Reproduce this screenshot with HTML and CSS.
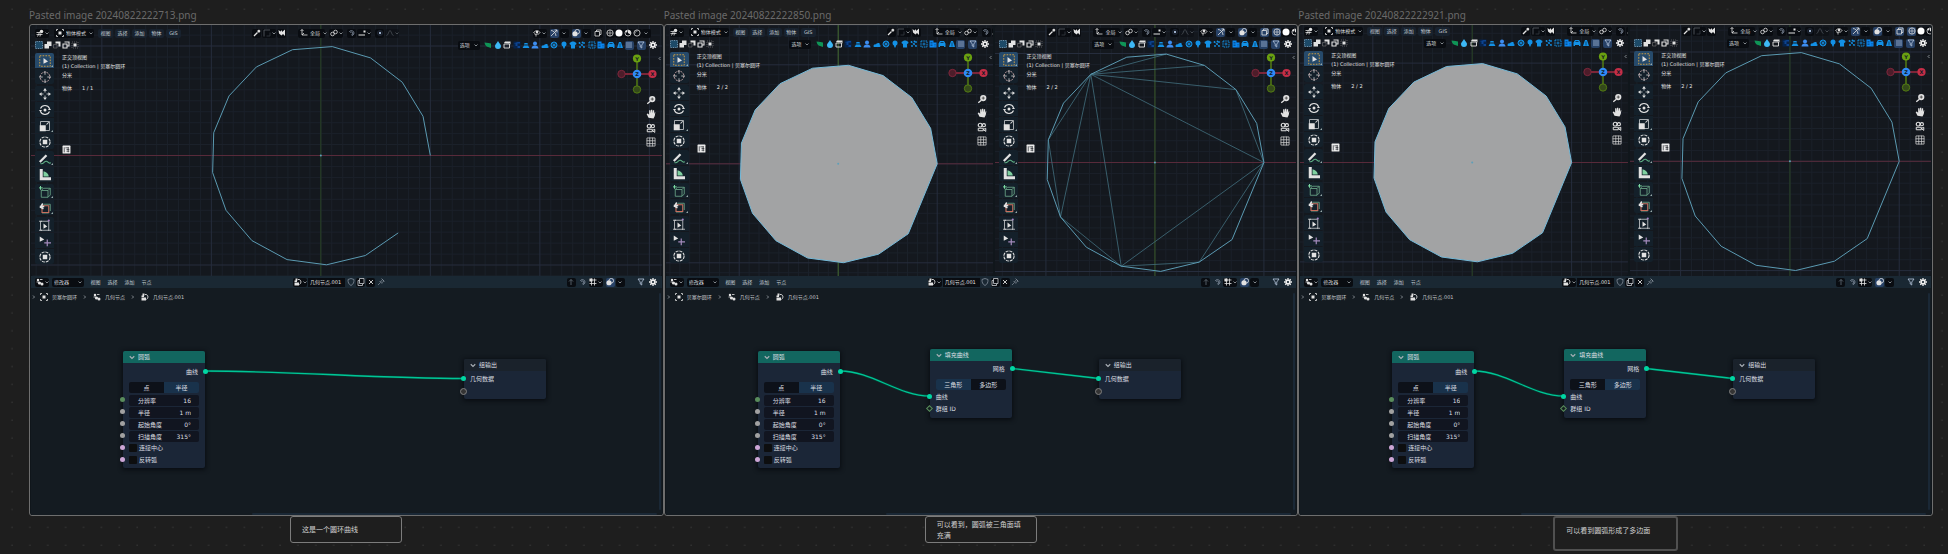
FILE: index.html
```html
<!DOCTYPE html>
<html lang="zh-CN">
<head>
<meta charset="utf-8">
<title>Canvas</title>
<link rel="stylesheet" href="styles.css">
</head>
<body>
<svg class="dots" aria-hidden="true">
  <defs><pattern id="dot" width="17.87" height="17.87" patternUnits="userSpaceOnUse"><rect x="11.4" y="8.6" width="1.4" height="1.2" fill="#363636"/></pattern></defs>
  <rect width="100%" height="100%" fill="url(#dot)"/>
</svg>
<main class="canvas">
  <section class="column">
    <h2 class="title">Pasted image 20240822222713.png</h2>
    <article class="card">
      <div class="views views-single">
        <div class="viewport" data-scene="arc"></div>
      </div>
      <div class="nodes" data-fill="none"></div>
    </article>
    <p class="note">这是一个圆环曲线</p>
  </section>
  <section class="column">
    <h2 class="title">Pasted image 20240822222850.png</h2>
    <article class="card card-b">
      <div class="views">
        <div class="viewport" data-scene="solid"></div>
        <div class="viewport" data-scene="triangles"></div>
      </div>
      <div class="nodes" data-fill="三角形"></div>
    </article>
    <p class="note">可以看到，圆弧被三角面填充满</p>
  </section>
  <section class="column">
    <h2 class="title">Pasted image 20240822222921.png</h2>
    <article class="card card-c">
      <div class="views">
        <div class="viewport" data-scene="solidNgon"></div>
        <div class="viewport" data-scene="ngon"></div>
      </div>
      <div class="nodes" data-fill="多边形"></div>
    </article>
    <p class="note note-large">可以看到圆弧形成了多边面</p>
  </section>
</main>
<script src="app.js"></script>
</body>
</html>
```
FILE: styles.css
```css
* { box-sizing: border-box; }

body {
  margin: 0;
  background: #1e1e1e;
  color: #d4d8dc;
  font-family: "DejaVu Sans", "Noto Sans CJK SC", sans-serif;
  font-size: 5px;
  line-height: 9px;
}

button, input, select {
  margin: 0;
  padding: 0;
  border: 0;
  background: none;
  color: inherit;
  font: inherit;
}

svg { display: block; flex: none; }

.dots {
  position: absolute;
  inset: 0;
  z-index: -1;
  width: 100%;
  height: 100%;
}

/* canvas */
.canvas {
  display: grid;
  grid-template-columns: repeat(3, minmax(0, 1fr));
  min-height: 100vh;
  padding: 7px 15px 0 29px;
  align-items: start;
}

.title {
  margin: 0 0 1px;
  color: #6a6a6a;
  font: 400 10px/16px "Noto Sans", sans-serif;
}

.card {
  overflow: hidden;
  padding: 0 1px;
  border: 1px solid #6e6e6e;
  border-radius: 3px;
  background: #10161b;
}

.note {
  display: flex;
  align-items: center;
  width: 112px;
  min-height: 27px;
  margin: 0 0 0 261px;
  padding: 1px 11px;
  border: 1px solid #7c7c7c;
  border-radius: 3px;
  background: #1e1e1e;
  color: #d2d2d2;
  font: 400 7px/11px "Noto Sans CJK SC", sans-serif;
}

.note-large {
  align-items: flex-start;
  width: 125px;
  min-height: 35px;
  margin-left: 255px;
  padding-top: 7px;
  border: 2px solid #505050;
}

/* 3D viewports */
.views {
  display: grid;
  grid-template-columns: minmax(0, 328fr) minmax(0, 301fr);
  gap: 2px;
}
.views-single { grid-template-columns: minmax(0, 1fr); }

.viewport {
  position: relative;
  overflow: hidden;
  min-height: 251px;
  padding-top: 2px;
  border-radius: 3px;
  background: #14181e;
}
.card-b .viewport { padding-top: 1px; }
.card-c .viewport { padding-top: 0; }

.scene {
  position: absolute;
  inset: 0;
  width: 100%;
  height: 100%;
}

.bar {
  position: relative;
  display: flex;
  align-items: center;
  height: 12px;
  padding-left: 4px;
  white-space: nowrap;
}

.i { width: 8px; height: 8px; }
.chev { width: 4px; height: 4px; }

.ib {
  display: flex;
  flex: none;
  align-items: center;
  justify-content: center;
  gap: 1px;
  height: 9px;
  min-width: 9px;
  border-radius: 2px;
}
.dark { background: #090c11; }
.lit { background: #274166; }
.dim { opacity: 0.45; }
.wide { width: 14px; }
.snap { width: 14px; }

.pick {
  display: flex;
  flex: none;
  align-items: center;
  gap: 2px;
  height: 9px;
  padding: 0 2px;
  border-radius: 2px;
  background: #090c11;
}
.pick select { flex: 1; appearance: none; height: 9px; }
.pick-mode { width: 40px; margin-left: 5px; }
.pick-orient { width: 27px; margin-left: 8px; }
.pick-options { width: 22px; }
.pick-modifier { width: 32px; margin-left: 3px; }

.menu {
  display: flex;
  flex: none;
  margin-left: 2px;
}
.menu button { width: 17px; height: 9px; color: #c2cad1; }
.views .menu button { width: 15px; margin-left: 2px; border-radius: 2px; background: #18222e; }

.mid { display: flex; flex: none; align-items: center; gap: 4px; margin-left: 71px; }
.mid.first { margin-left: 48px; }
.right { display: flex; flex: none; align-items: center; gap: 3px; margin-left: auto; padding-right: 11px; }
.mid.first + .right { margin-left: 5px; padding-right: 0; }
.pair { display: flex; gap: 1px; }
.shading { display: flex; align-items: center; }

.modes { display: flex; gap: 1px; }
.filters { display: flex; align-items: center; margin-left: auto; padding-right: 4px; }
.types { display: grid; grid-template-columns: repeat(15, 1fr); width: 141px; margin: 0 0 0 4px; justify-items: center; }
.filters > .ib { margin-left: 3px; }
.filters > .types + .ib { margin-left: 0; }

.stage { position: relative; display: flex; padding: 2px 0 0 4px; }

.tools { display: flex; flex-direction: column; gap: 2px; flex: none; }
.group { display: flex; flex-direction: column; gap: 1px; }
.tool {
  position: relative;
  display: flex;
  align-items: center;
  justify-content: center;
  width: 19px;
  height: 15px;
  background: #14202a;
}
.group .tool:first-child { border-radius: 2px 2px 0 0; }
.group .tool:last-child { border-radius: 0 0 2px 2px; }
.tool .i { width: 12px; height: 12px; }
.tool.active { background: #264a6b; }
.tool.more::after {
  content: "";
  position: absolute;
  right: 1px;
  bottom: 1px;
  border: 1px solid transparent;
  border-right-color: #9aa;
  border-bottom-color: #9aa;
}

.info { margin-left: 8px; color: #e4e4e4; white-space: nowrap; }
.info p { margin: 0; }
.info .count { display: flex; gap: 10px; margin-top: 4px; }
.info .badge { width: 9px; height: 9px; margin-top: 52px; }

.nav {
  display: flex;
  flex-direction: column;
  align-items: flex-end;
  margin-left: auto;
}
.gizmo { width: 42px; height: 42px; margin-right: 4px; }
.nav button { margin: 0 6px 4px 0; }
.nav button .i { width: 10px; height: 10px; }
.edge { position: absolute; top: 5px; right: 0; width: 4px; height: 5px; }

/* node editor */
.nodes { position: relative; background: #141b21; }
.nodes > .bar { height: 12px; background: #1a2833; }
.nodes .menu { margin-left: 3px; }
.nodes .menu button { width: 17px; }
.block { display: flex; align-items: center; gap: 1px; margin-left: 138px; }
.block input { width: 37px; height: 9px; padding-left: 2px; background: #090c11; color: #e2e2e2; }
.nodes .right { padding-right: 4px; }
.apart { margin-left: 9px; }

.crumbs {
  display: flex;
  align-items: center;
  gap: 4px;
  height: 18px;
  padding-left: 1px;
  color: #c6c9cc;
}
.crumbs .i { width: 8px; height: 8px; }
.crumbs .chev { margin: 0 2px; }
.crumbs .chev:first-child { margin: 0; }

.graph { position: relative; height: 209px; }
.links { position: absolute; inset: 0; width: 100%; height: 100%; }
.hscroll, .vscroll { position: absolute; background: #1a2836; border-radius: 1px; }
.hscroll { left: 35%; right: 5px; bottom: 0; height: 2px; }
.vscroll { right: 1px; top: -13px; bottom: 5px; width: 2px; }

.node {
  position: absolute;
  width: 82px;
  padding-bottom: 2px;
  border-radius: 2px;
  background: #1b2637;
  box-shadow: 0 1px 4px 1px #090d12;
  color: #dcdfe2;
  font-size: 6px;
  line-height: 12px;
}
.node h3 {
  display: flex;
  align-items: center;
  gap: 3px;
  height: 12px;
  margin: 0;
  padding-left: 6px;
  border-radius: 2px 2px 0 0;
  background: #12665f;
  font: inherit;
}
.node h3 .chev { width: 6px; height: 6px; }
.node-arc { left: 92px; top: 45px; }
.node-fill { left: 264px; top: 43px; }
.node-out { left: 433px; top: 53px; }
.node-out h3 { background: #1a222b; }
.node-out { padding-bottom: 1px; }
.node-out .row { padding-left: 6px; }

.row {
  position: relative;
  display: flex;
  align-items: center;
  height: 12px;
  padding: 0 6px;
}
.row.out { justify-content: flex-end; height: 17px; padding-right: 7px; }
.node-out .row:nth-child(2) { height: 15px; }
.node-fill .row.out { height: 16px; }
.node-fill { padding-bottom: 3px; }

.segments { display: flex; margin: 2px 6px 1px; height: 11px; border-radius: 2px; overflow: hidden; }
.segments button { flex: 1; background: #0d1119; line-height: 11px; }
.segments .on { background: #19324b; }

.field {
  display: flex;
  flex: 1;
  min-width: 0;
  height: 11px;
  padding: 0 8px 0 9px;
  border-radius: 2px;
  background: #111520;
  line-height: 11px;
}
.field span { flex: none; }
.field input { flex: 1; min-width: 0; text-align: right; }
.check { display: flex; align-items: center; gap: 2px; }
.check input { appearance: none; width: 8px; height: 8px; border-radius: 1px; background: #0d0e0f; }

.socket {
  position: absolute;
  left: -3px;
  top: 50%;
  width: 5px;
  height: 5px;
  margin-top: -3px;
  border-radius: 50%;
  background: #00d6a3;
}
.out .socket { left: auto; right: -3px; }
.int { background: #598c5c; }
.float { background: #a1a1a1; }
.bool { background: #cca6d6; }
.field-int { border: 1px solid #598c5c; border-radius: 0; background: #14201f; transform: rotate(45deg); }
.virtual { width: 7px; height: 7px; left: -4px; margin-top: -4px; border: 1px solid #808080; background: #343434; }
```
FILE: app.js
```js
const W = '#e2e2e2', B = '#1391e6';
const stroke = (d, c = W, w = 1.6) => `<path d="${d}" fill="none" stroke="${c}" stroke-width="${w}"/>`;
const solid = (d, c = W) => `<path d="${d}" fill="${c}"/>`;
const ring = (x, y, r, c = W, w = 1.6) => `<circle cx="${x}" cy="${y}" r="${r}" fill="none" stroke="${c}" stroke-width="${w}"/>`;
const disc = (x, y, r, c = W) => `<circle cx="${x}" cy="${y}" r="${r}" fill="${c}"/>`;

const ICONS = {
  editor3d: stroke('M1 11h12M3 15L7 7M8 15l1-6M1 7h7') + disc(11, 5, 3.5),
  object: solid('M5 5h6v6H5z') + stroke('M1 4V1h3M12 1h3v3M15 12v3h-3M4 15H1v-3'),
  dropper: stroke('M2 14l7-7', W, 2.6) + solid('M8 4l4 4 3-4-3-3z'),
  corner: stroke('M2 15V2h12', '#5a6068') + stroke('M14 7v7H7', '#353a42'),
  paint: solid('M1 2l4 3 3-3v4l6-5v13l-4-4-3 3-5-4z'),
  axes: stroke('M4 1v11h11M1 4l3-3 3 3M8 8l-4 4'),
  link: ring(5, 10, 3.6) + ring(11, 6, 3.6),
  magnet: stroke('M3 5a5 5 0 1 1 5 8M6 7a2 2 0 1 1 2 3M3 5l3 2M8 10v3', '#8793a3'),
  increment: stroke('M1 12h13', W, 2) + solid('M11 3h4v4h-4z'),
  gridsnap: stroke('M1 4h14M1 11h14M5 1v14M11 1v14') + solid('M1 1h6v6H1z'),
  dot: disc(8, 8, 2.4, '#9fb3cf') + ring(8, 8, 5, '#34425c', 1),
  wave: stroke('M1 13c4 0 4-10 7-10s3 10 7 10', '#878d94'),
  eye: stroke('M1 8c3-6 10-6 13-1M2 9c2 2 5 2 7 0') + disc(8, 6, 2.5) + stroke('M6 10v5M9 12l5-5'),
  gizmo: stroke('M2 14L14 2M9 2h5v5M2 3c5 0 10 5 10 11'),
  overlay: disc(6, 9.5, 5.2) + ring(10.5, 5.5, 4.6),
  xray: stroke('M2 5h9v9H2zM5 5V2h9v9h-3'),
  wire: ring(8, 8, 6.3) + stroke('M2 8h12M8 2v12', W, 1.2),
  sphere: disc(8, 8, 7, '#fff'),
  material: ring(8, 8, 6) + solid('M8 2a6 6 0 0 1 5 9L8 8z') + disc(5, 5, 2),
  rendered: ring(8, 8, 6.2) + stroke('M4 9c0-3 2-5 5-5', W, 1.3),
  selbox: `<rect x="1" y="1" width="14" height="14" fill="#1d4a68" stroke="#8fbfe0" stroke-width="1.4" stroke-dasharray="2 1.5"/>`,
  selext: solid('M1 6h5V1h9v9h-5v5H1z'),
  selsub: solid('M5 1h10v10h-4V5H5z') + stroke('M1 7h7v7H1z', '#777', 1.2),
  selxor: stroke('M5 2h9v8H9M2 6h8v8H2z', W, 2.2),
  selint: solid('M5 5h6v6H5z') + `<rect x="2" y="2" width="12" height="12" fill="none" stroke="#888" stroke-width="1.2" stroke-dasharray="2 2"/>`,
  leaf: solid('M1 3l8 1 5 1v9l-6-2c-4-1-6-4-7-9z', '#0f9456'),
  drop: solid('M8 0c3 5 6 7 6 10a6 6 0 0 1-12 0c0-3 3-5 6-10z', '#3db8f5'),
  clapper: stroke('M2 6h11v8H2z', W, 1.8) + solid('M2 4l2-3h11v7l-1-3z'),
  noise: `<rect x="1" y="1" width="14" height="14" fill="#06224a"/>` + solid('M1 5h4v5h4V5h5v-3H9zM9 10h5v4H9z', '#0c438f'),
  tray: solid('M1 14l3-5h8l3 5zM5 4h6l1 3H4z', B),
  person: disc(8, 5, 4, '#3d8df0') + solid('M1 15c0-4 3-6 7-6s7 2 7 6z', '#3d8df0'),
  cloud: solid('M1 13c0-3 2-5 5-4 0-3 6-5 8-1l-1 2c3 0 3 4 0 4H2z', B),
  wheel: ring(8, 8, 6, B, 2) + stroke('M8 2v12M2 8h12M4 4l8 8M12 4l-8 8', B, 1.3),
  bulb: disc(8, 6, 5, B) + solid('M5 8h6l-2 7H7z', B),
  shirt: solid('M1 4l5-3h4l5 3-1 4-2-1v8H4V7L2 8z', B),
  particles: [[3, 4], [8, 8], [4, 12], [12, 12], [12, 4], [9, 3]].map(p => disc(p[0], p[1], 1.8, B)).join('') + stroke('M3 4l9 8', B, 1),
  fluid: `<rect x="2" y="2" width="12" height="12" fill="none" stroke="${B}" stroke-width="2" stroke-dasharray="3 1.5"/>` + stroke('M5 8h6M8 5v6', B, 1.6),
  building: solid('M1 1h8v4h6v10H1z', '#0a86f0') + stroke('M3 5h4M3 8h4M3 11h4M11 9h2M11 12h2', '#0b2540', 1),
  car: solid('M1 7l3-5h8l3 5v7h-3v-2H4v2H1z', B) + stroke('M5 5h6', '#0b2540'),
  tree: solid('M6 2h4l4 12H2z', B) + stroke('M8 5v8', '#0b3a62'),
  list: stroke('M2 4h12M2 8h12M2 12h12', '#a8bede', 1.6),
  funnel: stroke('M2 2h12L9.500 8v6L6.500 12V8z', '#b9c8de'),
  gear: ring(8, 8, 3.8, '#f0f0f0', 3.2) + stroke('M8 0v3M8 13v3M0 8h3M13 8h3M2.500 2.500l2 2M11.500 11.500l2 2M13.500 2.500l-2 2M4.500 11.500l-2 2', '#f0f0f0', 2.6),
  toolselect: `<rect x="1" y="1" width="14" height="14" fill="none" stroke="#d9a441" stroke-width="1.2" stroke-dasharray="2.200 1.600"/>` + solid('M6 4l6 4.500-6 3z'),
  toolcursor: `<circle cx="8" cy="8" r="6.500" fill="none" stroke="#dcb6b6" stroke-width="1.200" stroke-dasharray="2.500 1.500"/>` + stroke('M8 0v5M8 11v5M0 8h5M11 8h5', W, 1),
  toolmove: solid('M8 0l2.500 3.500h-5zM8 16l2.500-3.500h-5zM0 8l3.500-2.500v5zM16 8l-3.500-2.500v5z') + stroke('M8 3v3M8 10v3M3 8h3M10 8h3', W, 1),
  toolrotate: stroke('M2 6a6.500 6.500 0 0 1 12 0M14 10a6.500 6.500 0 0 1-12 0', W, 1.4) + disc(8, 8, 2) + solid('M0 8h4l-2 3zM12 8h4l-2-3z'),
  toolscale: stroke('M2 2h12v12H2z', '#b8bcc0', 1.2) + solid('M1 7h8v8H1z') + stroke('M10 6l3-3', W, 1.4),
  tooltransform: `<circle cx="8" cy="8" r="6.800" fill="none" stroke="${W}" stroke-width="1.400" stroke-dasharray="4 1.300"/>` + solid('M5 5h6v6H5z'),
  toolpencil: stroke('M1 12l9-9', W, 3) + stroke('M2 14c4 2 5-4 8-3s3 4 6 2', '#5fae84', 1.4),
  toolmeasure: solid('M1 0h4v11h11v4H1z') + solid('M6 3c4 1 7 4 7 7H6z', '#7fd0a0'),
  toolcube: stroke('M3 6h9v9H3zM3 6l3-3h9v9l-3 3M12 6l3-3', '#6da98a', 1.1) + stroke('M2 0v5M0 2.500h5', '#7ddca4', 1.3),
  toolcage: stroke('M4 5h9v9H4z', '#c9705f', 1.5) + stroke('M6 3h9v9M4 16h9', '#6da98a', 1.1) + stroke('M1 6h6M5 2l-3 5 4 2', W, 2),
  toolbox: stroke('M2 3h11v12H2z', '#b8bcc0', 1.2) + solid('M6 6l5 4-5 3z') + disc(13, 2, 1.4, '#a783c9') + stroke('M0 3h4M0 15h4M12 15h4', W, 1),
  toolarrow: solid('M1 2l6 4-6 3z') + stroke('M11 6v9M7 10.500h9', '#a48bbd', 1.6),
  badge: `<rect x="1" y="1" width="14" height="14" rx="1" fill="#ececec"/>` + stroke('M4 4v9M6 5h6M8 8h5M8 11h5M11 4v9', '#1a1d22', 1.2),
  zoom: disc(10, 6.5, 5) + stroke('M2 14l5-4', W, 2.4) + stroke('M7.500 6.500h5M10 4v5', '#333', 1.2),
  hand: solid('M4 14L1 8l2-1 2 2V2h2v5l1-6h2v6l1-5h2v6l1-3h1l-1 6-2 4z'),
  camera: ring(5, 5, 3, W, 1.8) + ring(11, 5, 2.5, W, 1.8) + stroke('M2 10h8v4H2zM10 12l4-2v5z', W, 1.6),
  grid: stroke('M1.500 1.500h13v13h-13zM6 1v14M10.500 1v14M1 6h14M1 10.500h14', '#cfcfcf', 1.2),
  editornode: disc(4, 4, 2.5) + disc(7, 10, 3.2) + disc(12, 12, 3) + stroke('M1 8h5M8 3h5', W, 1.6),
  tree2: solid('M1 9h9v6H1zM1 5h5v3H1zM3 1h4v4H3z') + stroke('M8 3c6-1 8 6 3 10', W, 1.8),
  shield: `<path d="M8 1l6 2c0 6-1 9-6 12C3 12 2 9 2 3z" fill="none" stroke="#8993a0" stroke-width="1.500"/>`,
  copy: stroke('M5 1h9v10H5zM5 5H2v10h9v-3', '#c9cdd2'),
  close: stroke('M4 4l8 8M12 4l-8 8', '#dcdcdc', 1.8),
  pin: stroke('M2 14l5-5M5 6l5 5M7 8l4-5 3 3-5 4M9 1l6 6', '#8c96a1', 1.3),
  up: stroke('M8 14V3M4 7l4-4 4 4', '#66707a')
};

const ic = n => `<svg class="i" viewBox="0 0 16 16" aria-hidden="true">${ICONS[n]}</svg>`;
const chev = (d = 'M1 3l3 3 3-3') => `<svg class="chev" viewBox="0 0 8 8" aria-hidden="true">${stroke(d, '#aab0b6', 1.5)}</svg>`;
const ib = (n, cls = '', arrow = false) => `<button class="ib ${cls}" aria-label="${n}">${ic(n)}${arrow ? chev() : ''}</button>`;
const drop = () => `<button class="ib dark" aria-label="more">${chev()}</button>`;
const pick = (cls, text, icon) => `<label class="pick ${cls}">${icon ? ic(icon) : ''}<select aria-label="${text}"><option>${text}</option></select>${chev()}</label>`;
const menu = items => `<nav class="menu">${items.map(t => `<button>${t}</button>`).join('')}</nav>`;

/* viewports: nominal width, centre and radius of the arc */
const SCENES = {
  arc: { w: 631, x: 290, y: 130.5, r: 109.5, green: '#263f1f', count: '1 / 1' },
  solid: { w: 328, x: 172.3, y: 138.8, r: 99, fill: true, green: '#41662a', count: '2 / 2' },
  triangles: { w: 301, x: 160, y: 137.5, r: 109, wire: true, scrolled: true, green: '#34531f', count: '2 / 2' },
  solidNgon: { w: 328, x: 172.3, y: 137.5, r: 99.4, fill: true, green: '#263f1f', count: '2 / 2' },
  ngon: { w: 301, x: 160, y: 136.3, r: 109.3, closed: true, scrolled: true, green: '#263f1f', count: '2 / 2' }
};
const WIRES = [[6, 4], [6, 3], [6, 2], [6, 0], [2, 0], [6, 8], [6, 10], [8, 10], [6, 12], [10, 12], [12, 14], [12, 0], [14, 0]];

function scene(s) {
  const h = 251, step = s.r / 10;
  const pts = Array.from({ length: 16 }, (_, k) => {
    const a = k * 21 * Math.PI / 180;
    return [(s.x + s.r * Math.cos(a)).toFixed(1), (s.y - s.r * Math.sin(a)).toFixed(1)];
  });
  let minor = '', major = '';
  for (let k = -40; k <= 40; k++) {
    const gx = (s.x + k * step).toFixed(1), gy = (s.y + k * step).toFixed(1);
    const line = `M${gx} 0V${h}M0 ${gy}H${s.w}`;
    if (k % 10) minor += line; else major += line;
  }
  const closed = s.fill || s.wire || s.closed;
  const d = 'M' + pts.map(p => p.join(' ')).join('L') + (closed ? 'Z' : '');
  const wires = s.wire ? stroke(WIRES.map(([a, b]) => `M${pts[a].join(' ')}L${pts[b].join(' ')}`).join(''), '#42707f', 0.8) : '';
  return `<svg class="scene" viewBox="0 0 ${s.w} ${h}" preserveAspectRatio="xMidYMin slice" aria-hidden="true">
    ${stroke(minor, '#1b212a', 1)}${stroke(major, '#262d3d', 1)}
    ${stroke(`M${s.x} 0V${h}`, s.green, 1)}${stroke(`M0 ${s.y}H${s.w}`, '#582a3a', 1)}
    ${wires}<path d="${d}" fill="${s.fill ? '#a2a3a4' : 'none'}" stroke="${s.fill ? '#74b9d8' : '#5b9ab2'}" stroke-width="1"/>
    ${disc(s.x, s.y, 1, '#5e9fb8')}</svg>`;
}

const gizmo = `<svg class="gizmo" viewBox="0 0 42 42" aria-label="X Y Z">
  ${stroke('M21 21V6M21 21v15', '#5d8a12', 1.3)}${stroke('M6 21h30', '#a02a40', 1.3)}
  <circle cx="5.500" cy="21" r="3.700" fill="#4d1d2a" stroke="#8b2940" stroke-width=".8"/>
  <circle cx="21" cy="36.500" r="3.700" fill="#34491a" stroke="#5d8a12" stroke-width=".8"/>
  ${disc(36.5, 21, 4.1, '#c52e47')}${disc(21, 5.5, 4.1, '#6ba110')}${disc(21, 21, 4.3, '#2f8af5')}
  <g fill="#111a24" font-size="5" font-weight="700" text-anchor="middle"><text x="36.500" y="23">X</text><text x="21" y="7.500">Y</text><text x="21" y="23">Z</text></g></svg>`;

const TOOLS = [['select*', 'cursor'], ['move', 'rotate', 'scale*', 'transform'], ['pencil*', 'measure'], ['cube*', 'cage*'], ['box', 'arrow', 'transform']];
const TYPES = ['leaf', 'drop', 'clapper', 'noise', 'tray', 'person', 'cloud', 'wheel', 'bulb', 'shirt', 'particles', 'fluid', 'building', 'car', 'tree'];

function viewport(s) {
  const left = s.scrolled ? '' : ib('editor3d', 'dark wide', true) + pick('pick-mode', '物体模式', 'object') + menu(['视图', '选择', '添加', '物体', 'GIS']);
  const tools = TOOLS.map((g, i) => `<div class="group">${g.map((t, j) => {
    const n = t.replace('*', '');
    return `<button class="tool ${t !== n ? 'more' : ''} ${i + j ? '' : 'active'}" aria-label="${n}">${ic('tool' + n)}</button>`;
  }).join('')}</div>`).join('');
  return `${scene(s)}
  <div class="bar">${left}
    <div class="mid ${s.scrolled ? 'first' : ''}">
      <div class="pair">${ib('dropper', 'dark')}${ib('corner', 'dark wide', true)}${ib('paint', 'dark')}</div>
      ${pick('pick-orient', '全局', 'axes')}${ib('link', 'dark wide', true)}
      <div class="pair">${ib('magnet', 'dark')}${ib('increment', 'dark snap', true)}</div>
      <div class="pair">${ib('dot', 'dark')}${ib('wave', 'dark wide dim', true)}</div>
    </div>
    <div class="right">
      ${ib('eye', 'dark wide', true)}
      <div class="pair">${ib('gizmo', 'lit')}${drop()}</div>
      <div class="pair">${ib('overlay', 'lit')}${drop()}</div>
      ${ib('xray', s.scrolled ? 'lit' : 'dark')}
      <div class="shading">${ib('wire', s.scrolled ? 'lit' : 'dark')}${ib('sphere', 'dark')}${ib('material', 'dark')}${ib('rendered', 'dark')}${drop()}</div>
    </div>
  </div>
  <div class="bar">
    <div class="modes">${['selbox', 'selext', 'selsub', 'selxor', 'selint'].map(ic).join('')}</div>
    <div class="filters">${pick('pick-options', '选项')}<div class="types">${TYPES.map(ic).join('')}</div>${ib('list', 'lit')}${ib('funnel', 'lit')}${ib('gear')}</div>
  </div>
  <div class="stage">
    <div class="tools">${tools}</div>
    <div class="info"><p>正交顶视图</p><p>(1) Collection | 贝塞尔圆环</p><p>分米</p><p class="count"><span>物体</span><span>${s.count}</span></p><div>${ic('badge').replace('class="i"', 'class="badge"')}</div></div>
    <div class="nav">${gizmo}${['zoom', 'hand', 'camera', 'grid'].map(n => `<button aria-label="${n}">${ic(n)}</button>`).join('')}</div>
    ${chev('M5 1L2 4l3 3').replace('"chev"', '"edge"')}
  </div>`;
}

/* node editor */
const socket = c => `<i class="socket ${c}"></i>`;
const head = t => `<h3>${chev()}${t}</h3>`;
const field = (n, v, c) => `<div class="row">${socket(c)}<label class="field"><span>${n}</span><input type="text" value="${v}"></label></div>`;
const check = n => `<div class="row">${socket('bool')}<label class="check"><input type="checkbox">${n}</label></div>`;
const segments = (items, on) => `<div class="segments">${items.map(t => `<button class="${t === on ? 'on' : ''}" aria-pressed="${t === on}">${t}</button>`).join('')}</div>`;

function nodeEditor(fill) {
  const has = fill !== 'none';
  const links = has
    ? 'M174 65C206 65 232 90 264 90M346 62.500L433 72.500'
    : 'M174 65C260 65 347 72.500 433 72.500';
  return `<div class="bar">${ib('editornode', 'dark wide', true)}${pick('pick-modifier', '修改器')}${menu(['视图', '选择', '添加', '节点'])}
    <div class="block">${ib('tree2', 'dark wide', true)}<input type="text" value="几何节点.001" aria-label="节点组">${ib('shield')}${ib('copy', 'dark')}${ib('close', 'dark')}${ib('pin', '')}</div>
    <div class="right">${ib('up', 'dark')}<div class="pair">${ib('magnet')}${ib('gridsnap', 'dark snap', true)}</div><div class="pair">${ib('overlay', 'lit')}${drop()}</div><span class="apart">${ib('funnel')}</span>${ib('gear')}</div>
  </div>
  <div class="crumbs">${chev('M2 1l3 3-3 3')}${ic('object')}<span>贝塞尔圆环</span>${chev('M2 1l3 3-3 3')}${ic('editornode')}<span>几何节点</span>${chev('M2 1l3 3-3 3')}${ic('tree2')}<span>几何节点.001</span></div>
  <div class="graph">
    <svg class="links" aria-hidden="true">${stroke(links, '#063d33', 2.6)}${stroke(links, '#00c596', 1.3)}</svg>
    <section class="node node-arc">${head('圆弧')}<div class="row out">曲线${socket('')}</div>${segments(['点', '半径'], '半径')}
      ${field('分辨率', '16', 'int')}${field('半径', '1 m', 'float')}${field('起始角度', '0°', 'float')}${field('扫描角度', '315°', 'float')}${check('连接中心')}${check('反转弧')}</section>
    ${has ? `<section class="node node-fill">${head('填充曲线')}<div class="row out">网格${socket('')}</div>${segments(['三角形', '多边形'], fill)}
      <div class="row">${socket('')}曲线</div><div class="row">${socket('field-int')}群组 ID</div></section>` : ''}
    <section class="node node-out">${head('组输出')}<div class="row">${socket('')}几何数据</div><div class="row">${socket('virtual')}</div></section>
    <div class="hscroll"></div><div class="vscroll"></div>
  </div>`;
}

document.querySelectorAll('.viewport').forEach(el => { el.innerHTML = viewport(SCENES[el.dataset.scene]); });
document.querySelectorAll('.nodes').forEach(el => { el.innerHTML = nodeEditor(el.dataset.fill); });
```
